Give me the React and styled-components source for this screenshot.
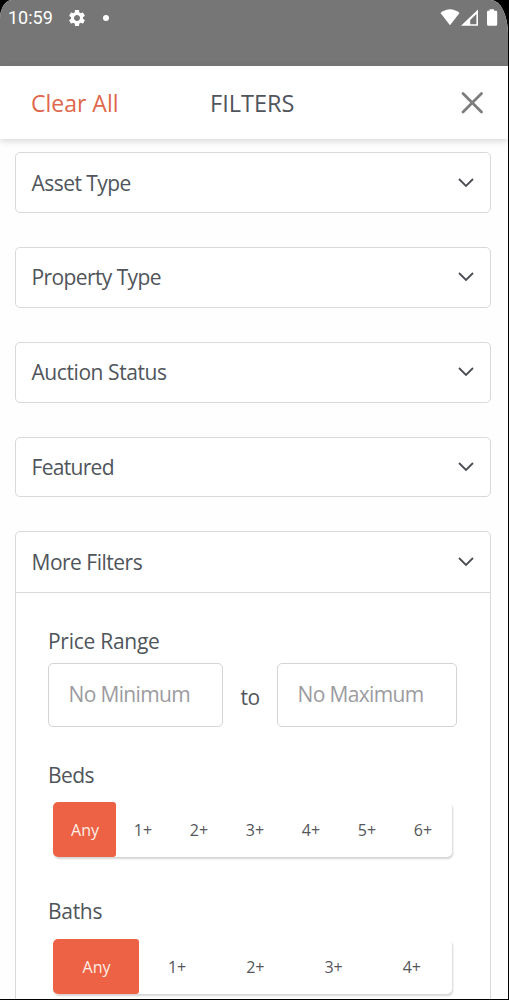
import React from 'react';
import styled, { createGlobalStyle } from 'styled-components';
import { MdSettings } from 'react-icons/md';

const GlobalStyle = createGlobalStyle`
    * {
        box-sizing: border-box;
    }
    body {
        margin: 0;
        background: #000;
        font-family: "Open Sans", "Noto Sans", sans-serif;
        color: #50555b;
    }
    button, input {
        font: inherit;
        color: inherit;
        margin: 0;
    }
`;

const Screen = styled.div`
    width: 508px;
    height: 999px;
    display: flex;
    flex-direction: column;
    overflow: hidden;
    background: #fefefe;
    border-top-left-radius: 12px 19px;
    border-top-right-radius: 17px 34px;
`;

const StatusBar = styled.div`
    flex: none;
    height: 66px;
    padding: 6px 10px 0 8px;
    display: flex;
    align-items: flex-start;
    justify-content: space-between;
    background: #767676;
    color: #fff;
    font-family: Roboto, sans-serif;
    font-size: 18px;
    line-height: 24px;
    .side {
        display: flex;
        align-items: center;
        height: 24px;
    }
    svg {
        display: block;
    }
`;

const Clock = styled.span`
    width: 46px;
    margin-right: 13px;
    white-space: nowrap;
`;

const Dot = styled.span`
    width: 6px;
    height: 6px;
    margin-left: 16px;
    border-radius: 50%;
    background: #fff;
`;

const Header = styled.header`
    flex: none;
    position: relative;
    height: 73px;
    padding: 0 24px 0 31px;
    display: grid;
    grid-template-columns: 179px 1fr auto;
    align-items: center;
    background: #fff;
    box-shadow: 0 2px 7px rgba(60, 50, 60, 0.2);
`;

const Text = styled.span`
    font-size: ${({ $size }) => $size || 21}px;
    letter-spacing: ${({ $spacing }) => $spacing || 0}px;
    line-height: 28px;
    white-space: nowrap;
`;

const ClearButton = styled.button`
    padding: 0;
    border: 0;
    background: none;
    text-align: left;
    color: #e0674c;
`;

const CloseButton = styled.button`
    padding: 0;
    border: 0;
    background: none;
    svg {
        display: block;
    }
`;

const Filters = styled.main`
    flex: 1;
    min-height: 0;
    padding: 13.2px 17px 0 15px;
    display: flex;
    flex-direction: column;
    gap: 34px;
`;

const Panel = styled.section`
    flex: none;
    border: 1px solid #d9d9da;
    border-radius: 5px;
    background: #fff;
`;

const PanelHeader = styled.div`
    height: ${({ $open }) => ($open ? 59.5 : 58.8)}px;
    padding: 0 15px 0 15.5px;
    display: flex;
    align-items: center;
    justify-content: space-between;
    svg {
        display: block;
    }
`;

const PanelBody = styled.div`
    height: 480px;
    padding: 34px 32px 0;
    border-top: 1px solid #d9d9da;
`;

const GroupTitle = styled.h3`
    margin: 0;
    height: 28px;
    display: flex;
    align-items: center;
    font-weight: 400;
`;

const PriceRow = styled.div`
    display: grid;
    grid-template-columns: 175px 54px 180px;
    margin: 8px 0 34px;
`;

const PriceInput = styled.div`
    height: 64px;
    padding: 0 19.5px 1px;
    display: flex;
    align-items: center;
    border: 1px solid #d4d4d6;
    border-radius: 5px;
    color: #9c9b9f;
`;

const To = styled.div`
    padding-top: 4px;
    display: flex;
    align-items: center;
    justify-content: center;
`;

const Segmented = styled.div`
    width: 399px;
    height: 55px;
    margin: 13px 0 40px 5px;
    display: flex;
    border-radius: 5px;
    background: #fff;
    box-shadow: 1px 2px 2px rgba(0, 0, 0, 0.17);
    & + h3 + & {
        margin-top: 14px;
    }
`;

const Segment = styled.button`
    flex: ${({ $width }) => ($width ? `0 0 ${$width}px` : '1 1 0')};
    padding: ${({ $active }) => ($active ? '2px 0 0 1px' : '2px 2px 0 0')};
    border: 0;
    border-radius: ${({ $active }) => ($active ? '5px 3px 3px 5px' : '0')};
    background: ${({ $active }) => ($active ? '#ed6144' : 'transparent')};
    color: ${({ $active }) => ($active ? '#fdeee6' : '#55565a')};
`;

const Chevron = () => (
    <svg width="18" height="12" viewBox="0 0 18 12" fill="none">
        <path d="M2 2 L9 9 L16 2" stroke="#4a4d52" strokeWidth="1.8" />
    </svg>
);

const dropdowns = [
    { label: 'Asset Type', spacing: -0.55 },
    { label: 'Property Type', spacing: -0.6 },
    { label: 'Auction Status', spacing: -0.42 },
    { label: 'Featured', spacing: -0.7 },
];

const Picker = ({ options, activeWidth }) => (
    <Segmented>
        {options.map((option, i) => (
            <Segment key={option} $active={i === 0} $width={i === 0 ? activeWidth : 0}>
                <Text $size={16}>{option}</Text>
            </Segment>
        ))}
    </Segmented>
);

export default function App() {
    return (
        <>
            <GlobalStyle />
            <Screen>
                <StatusBar>
                    <div className="side">
                        <Clock>10:59</Clock>
                        <MdSettings size={20} />
                        <Dot />
                    </div>
                    <div className="side">
                        <svg width="58" height="20" viewBox="0 0 58 20" fill="#fff">
                            <path d="M0.5 5 Q10 -2.5 19.500 5 L10 17.300 Z" />
                            <path fillRule="evenodd" d="M21 17.800 L38 1.500 V17.800 Z M30.200 16.300 H36.400 V6 L30.200 12 Z" />
                            <path d="M49.500 1.200 H54 V2.700 H56 Q57.200 2.700 57.200 4 V16.300 Q57.200 17.800 55.700 17.800 H48.500 Q47 17.800 47 16.300 V4 Q47 2.700 48.200 2.700 H49.500 Z" />
                        </svg>
                    </div>
                </StatusBar>
                <Header>
                    <ClearButton>
                        <Text $size={23}>Clear All</Text>
                    </ClearButton>
                    <Text $size={23.5}>FILTERS</Text>
                    <CloseButton>
                        <svg width="24" height="24" viewBox="0 0 24 24" fill="none">
                            <path d="M3 2.500 L21.500 21 M21.500 2.500 L3 21" stroke="#7d7d7d" strokeWidth="2.8" strokeLinecap="round" />
                        </svg>
                    </CloseButton>
                </Header>
                <Filters>
                    {dropdowns.map(({ label, spacing }) => (
                        <Panel key={label}>
                            <PanelHeader>
                                <Text $spacing={spacing}>{label}</Text>
                                <Chevron />
                            </PanelHeader>
                        </Panel>
                    ))}
                    <Panel>
                        <PanelHeader $open>
                            <Text $spacing={-0.5}>More Filters</Text>
                            <Chevron />
                        </PanelHeader>
                        <PanelBody>
                            <GroupTitle>
                                <Text $spacing={-0.27}>Price Range</Text>
                            </GroupTitle>
                            <PriceRow>
                                <PriceInput>
                                    <Text $spacing={-0.65}>No Minimum</Text>
                                </PriceInput>
                                <To>
                                    <Text $spacing={-0.5}>to</Text>
                                </To>
                                <PriceInput>
                                    <Text $spacing={-0.65}>No Maximum</Text>
                                </PriceInput>
                            </PriceRow>
                            <GroupTitle>
                                <Text $spacing={-0.6}>Beds</Text>
                            </GroupTitle>
                            <Picker options={['Any', '1+', '2+', '3+', '4+', '5+', '6+']} activeWidth={63} />
                            <GroupTitle>
                                <Text $spacing={-0.3}>Baths</Text>
                            </GroupTitle>
                            <Picker options={['Any', '1+', '2+', '3+', '4+']} activeWidth={86} />
                        </PanelBody>
                    </Panel>
                </Filters>
            </Screen>
        </>
    );
}
